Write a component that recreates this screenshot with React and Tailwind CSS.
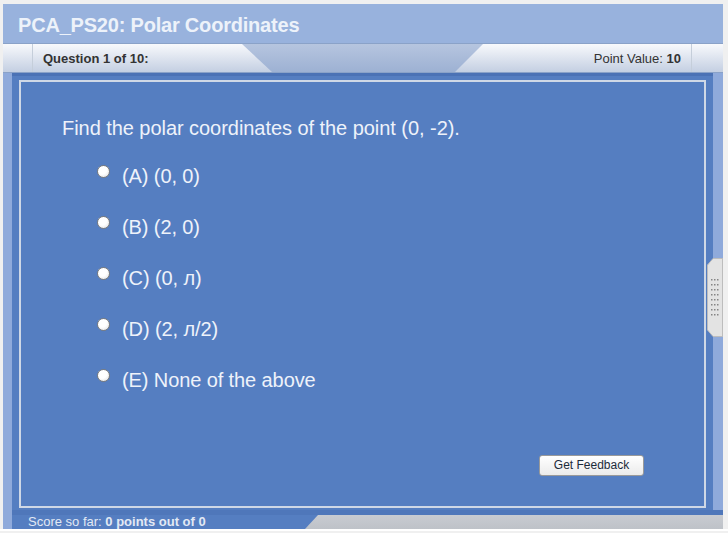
import React from 'react';

const options = [
  '(A) (0, 0)',
  '(B) (2, 0)',
  '(C) (0, л)',
  '(D) (2, л/2)',
  '(E) None of the above',
];

const Radio = () => (
  <span className="mt-[1px] h-[13px] w-[13px] shrink-0 rounded-full border border-[#7d7d7d] bg-[radial-gradient(circle_at_40%_35%,#ffffff_45%,#d9d9d9_100%)]" />
);

const Grip = () => (
  <svg width="16" height="79" viewBox="0 0 16 79">
    <polygon points="6,0.5 15.5,0.5 15.5,78.5 6,78.5 0.5,72 0.5,7" fill="#e3e3e3" stroke="#bdbdbd" />
    {[0, 1, 2, 3, 4, 5, 6, 7].map((r) =>
      [0, 1, 2].map((c) => (
        <rect key={`${r}-${c}`} x={4 + c * 3} y={21 + r * 5} width="1.5" height="1.5" fill="#858585" />
      ))
    )}
  </svg>
);

export default function App() {
  return (
    <div className="h-[533px] w-[728px] overflow-hidden bg-[#f0f0f0] pt-[4px] font-['Liberation_Sans',Arial,sans-serif]">
      <div className="ml-[3px] flex h-[525px] w-[720px] flex-col">
        {/* Title */}
        <div className="h-[39px] bg-[#98b2dd] pl-[15px] pt-[9px] text-[20px] font-bold leading-[24px] tracking-[-0.2px] text-[#edf2fa]">
          PCA_PS20: Polar Coordinates
        </div>

        {/* Tabs */}
        <div className="flex h-[30px] border-y border-[#8aa2c8] bg-gradient-to-b from-[#b6c5df] to-[#9db1d3] text-[13px] leading-[15px] text-[#333]">
          <div className="w-[30px] border-r border-[#c5ceda] bg-gradient-to-b from-[#f8f9fc] to-[#c4cfe2]" />
          <div className="flex w-[239px] items-center bg-gradient-to-b from-[#f8f9fc] to-[#c4cfe2] pl-[10px] font-bold [clip-path:polygon(0_0,209px_0,100%_100%,0_100%)]">
            Question 1 of 10:
          </div>
          <div className="flex-1" />
          <div className="flex w-[237px] items-center justify-end border-r border-[#c5ceda] bg-gradient-to-b from-[#f8f9fc] to-[#c4cfe2] pr-[10px] [clip-path:polygon(28px_0,100%_0,100%_100%,0_100%)]">
            Point Value:&nbsp;<b>10</b>
          </div>
          <div className="w-[31px] bg-gradient-to-b from-[#f8f9fc] to-[#c4cfe2]" />
        </div>

        {/* Body */}
        <div className="flex flex-1">
          <div className="w-[9px] bg-[#8faadb]" />
          <div className="flex flex-1 flex-col">
            <div className="relative flex h-[437px]">
              <div className="flex-1 border-t-[3px] border-[#4b72b5] bg-[#557ec1] pb-[2px] pl-[7px] pr-[7px] pt-[4px]">
                <div className="flex h-[428px] flex-col border-2 border-[#cfd8e6] pl-[41px] pt-[34px] text-[20px] leading-[24px] text-[#eef2fa]">
                  <p className="tracking-[-0.05px]">Find the polar coordinates of the point (0, -2).</p>
                  <div className="ml-[35px] mt-[24px] flex flex-col gap-[27px]">
                    {options.map((o) => (
                      <div key={o} className="flex items-start gap-[12px]">
                        <Radio />
                        <span className="tracking-[-0.1px]">{o}</span>
                      </div>
                    ))}
                  </div>
                  <div className="mt-auto flex justify-end pb-[30px] pr-[60px]">
                    <button className="h-[21px] w-[105px] rounded-[3px] border border-[#9a9a9a] bg-gradient-to-b from-[#ffffff] to-[#ebebeb] text-[12px] leading-[19px] text-[#1c2b3a]">
                      Get Feedback
                    </button>
                  </div>
                </div>
              </div>
              <div className="w-[10px] bg-[#8faadb]" />
              <div className="absolute right-0 top-[185px]">
                <Grip />
              </div>
            </div>

            {/* Bottom bar */}
            <div className="flex h-[19px] border-t-[5px] border-[#4f77ba] bg-[#557ec1] text-[13px] leading-[14px] text-[#e2e9f4]">
              <div className="w-[293px] pl-[16px]">
                Score so far: <b>0 points out of 0</b>
              </div>
              <div className="flex-1 bg-gradient-to-b from-[#c8cbd1] to-[#bec2c8] [clip-path:polygon(13px_0,100%_0,100%_100%,0_100%)]" />
            </div>
          </div>
        </div>
      </div>
      <div className="h-[2px] bg-white" />
    </div>
  );
}
